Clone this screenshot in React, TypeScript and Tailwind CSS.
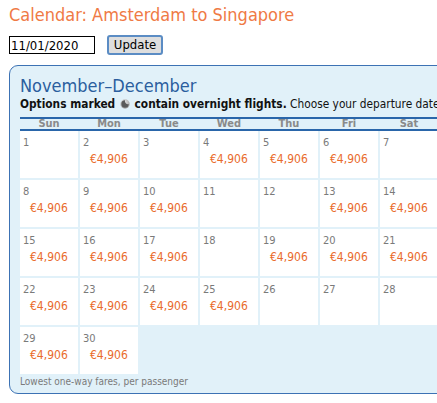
import React from "react";

const F = { fontFamily: "'DejaVu Sans Condensed', 'DejaVu Sans', Verdana, sans-serif" };

type Cell = { d: number; p: boolean } | null;

const priced = new Set([2, 4, 5, 6, 8, 9, 10, 13, 14, 15, 16, 17, 19, 20, 21, 22, 23, 24, 25, 29, 30]);

function buildWeeks(): Cell[][] {
  const weeks: Cell[][] = [];
  let w: Cell[] = [];
  for (let d = 1; d <= 30; d++) {
    w.push({ d, p: priced.has(d) });
    if (w.length === 7) {
      weeks.push(w);
      w = [];
    }
  }
  if (w.length) weeks.push(w);
  return weeks;
}

function Overnight() {
  return (
    <svg width="10" height="10" viewBox="0 0 10 10" className="inline-block align-[-1px] mx-[1px]">
      <defs>
        <radialGradient id="g" cx="0.4" cy="0.35" r="0.7">
          <stop offset="0" stopColor="#ececec" />
          <stop offset="1" stopColor="#a0a0a0" />
        </radialGradient>
      </defs>
      <circle cx="5" cy="5" r="4.7" fill="url(#g)" />
      <path d="M5 1.3 A3.7 3.7 0 1 0 8.7 5 A3 3 0 0 1 5 1.3 Z" fill="#5a5a5a" />
    </svg>
  );
}

export default function App() {
  const weeks = buildWeeks();
  const days = ["Sun", "Mon", "Tue", "Wed", "Thu", "Fri", "Sat"];
  return (
    <div className="w-[437px] h-[403px] overflow-hidden bg-white" style={F}>
      <div className="pl-[9px] pt-[4px]">
        <h1 className="text-[18px] leading-[22px] text-[#ef7a45] whitespace-nowrap">
          Calendar: Amsterdam to Singapore
        </h1>
        <div className="flex items-center mt-[9px] h-[20px]">
          <input
            defaultValue="11/01/2020"
            className="w-[86px] h-[18px] border border-black px-[1px] text-[13px] leading-[16px] text-black outline-none"
            style={F}
          />
          <button
            className="ml-[12px] w-[56px] h-[20px] rounded-[3px] border-[2px] border-[#5b8cc4] bg-[#dedede] text-[13px] leading-[14px] text-black"
            style={F}
          >
            Update
          </button>
        </div>
        <div className="mt-[10px] w-[460px] h-[329px] rounded-[9px] border border-[#3c72b4] bg-[#e1f1f9] pl-[10px] pt-[10px]">
          <div className="text-[18px] leading-[20px] text-[#2b5e9e] whitespace-nowrap">November–December</div>
          <div className="text-[11.8px] leading-[14px] text-[#111] whitespace-nowrap mt-[1px]">
            <span className="font-bold">
              Options marked <Overnight /> contain overnight flights.
            </span>{" "}
            Choose your departure date
          </div>
          <div className="mt-[6px] w-[420px] border-t-[2px] border-b-[2px] border-[#2a66aa] h-[14px] grid grid-cols-[repeat(7,60px)]">
            {days.map((d) => (
              <div key={d} className="text-center text-[11px] leading-[10px] font-bold text-[#8a8a8a] pr-[2px]">
                {d}
              </div>
            ))}
          </div>
          <div className="flex flex-col gap-[2px]">
            {weeks.map((w, i) => (
              <div key={i} className="flex gap-[2px]">
                {w.map((c, j) =>
                  c ? (
                    <div key={j} className="w-[58px] h-[47px] bg-white pl-[3px] pt-[6px]">
                      <div className="text-[11px] leading-[12px] text-[#7a7a7a]">{c.d}</div>
                      {c.p && (
                        <div className="pl-[7px] mt-[3px] text-[12px] leading-[14px] text-[#e96b2c]">€4,906</div>
                      )}
                    </div>
                  ) : null
                )}
              </div>
            ))}
          </div>
          <div className="mt-[2px] text-[10px] leading-[12px] text-[#7a7a7a] whitespace-nowrap">
            Lowest one-way fares, per passenger
          </div>
        </div>
      </div>
    </div>
  );
}
